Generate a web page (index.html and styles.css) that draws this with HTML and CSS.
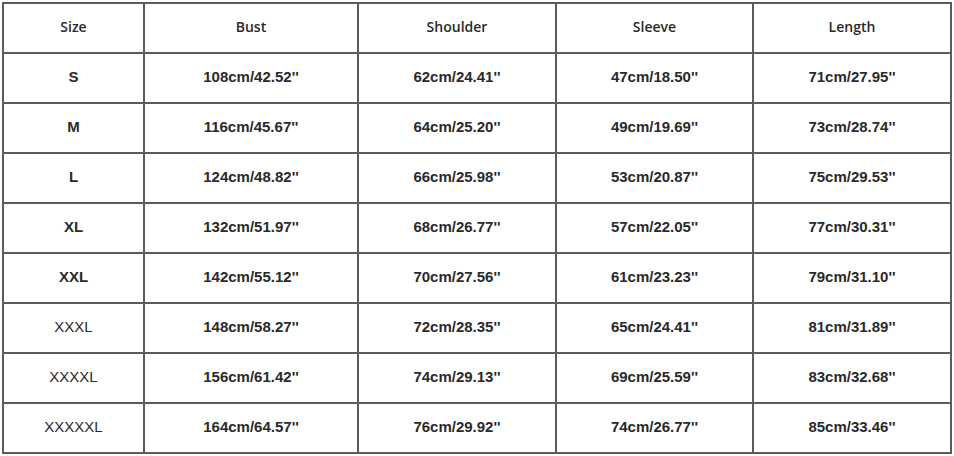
FILE: index.html
```html
<!DOCTYPE html>
<html>
<head>
<meta charset="utf-8">
<link rel="stylesheet" href="styles.css">
</head>
<body>
<div class="table">
  <div class="cell head">Size</div><div class="cell head">Bust</div><div class="cell head">Shoulder</div><div class="cell head">Sleeve</div><div class="cell head">Length</div>
  <div class="cell">S</div><div class="cell">108cm/42.52''</div><div class="cell">62cm/24.41''</div><div class="cell">47cm/18.50''</div><div class="cell">71cm/27.95''</div>
  <div class="cell">M</div><div class="cell">116cm/45.67''</div><div class="cell">64cm/25.20''</div><div class="cell">49cm/19.69''</div><div class="cell">73cm/28.74''</div>
  <div class="cell">L</div><div class="cell">124cm/48.82''</div><div class="cell">66cm/25.98''</div><div class="cell">53cm/20.87''</div><div class="cell">75cm/29.53''</div>
  <div class="cell">XL</div><div class="cell">132cm/51.97''</div><div class="cell">68cm/26.77''</div><div class="cell">57cm/22.05''</div><div class="cell">77cm/30.31''</div>
  <div class="cell">XXL</div><div class="cell">142cm/55.12''</div><div class="cell">70cm/27.56''</div><div class="cell">61cm/23.23''</div><div class="cell">79cm/31.10''</div>
  <div class="cell light">XXXL</div><div class="cell">148cm/58.27''</div><div class="cell">72cm/28.35''</div><div class="cell">65cm/24.41''</div><div class="cell">81cm/31.89''</div>
  <div class="cell light">XXXXL</div><div class="cell">156cm/61.42''</div><div class="cell">74cm/29.13''</div><div class="cell">69cm/25.59''</div><div class="cell">83cm/32.68''</div>
  <div class="cell light">XXXXXL</div><div class="cell">164cm/64.57''</div><div class="cell">76cm/29.92''</div><div class="cell">74cm/26.77''</div><div class="cell">85cm/33.46''</div>
</div>
</body>
</html>
```
FILE: styles.css
```css
html, body {
  margin: 0;
  padding: 0;
  background: #ffffff;
}
.table {
  margin: 2px 0 0 2px;
  width: 950px;
  box-sizing: border-box;
  display: grid;
  grid-template-columns: 139px 212px 196px 195px 196px;
  grid-auto-rows: 48px;
  gap: 2px;
  padding: 2px;
  background: #5c5c5c;
}
.cell {
  background: #ffffff;
  display: flex;
  align-items: center;
  justify-content: center;
  padding-bottom: 3px;
  font-family: "Liberation Sans", Arial, sans-serif;
  font-weight: bold;
  font-size: 15px;
  color: #2a2a2a;
}
.head {
  font-family: "Open Sans", "Liberation Sans", sans-serif;
  font-weight: 600;
  font-size: 14px;
  color: #2a2a2a;
}
.light {
  font-weight: normal;
  font-size: 15px;
}
```
